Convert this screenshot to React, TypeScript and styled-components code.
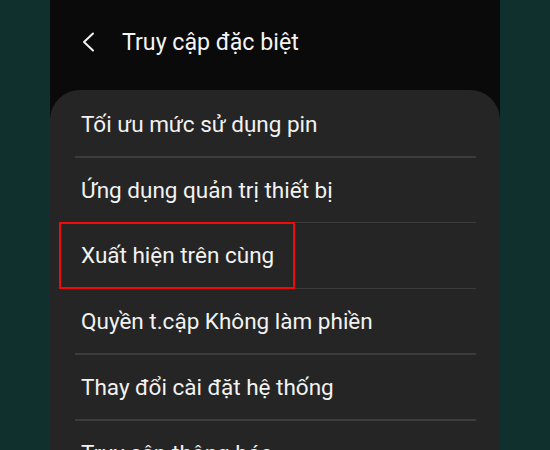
import React from 'react';
import styled, { createGlobalStyle } from 'styled-components';

const GlobalStyle = createGlobalStyle`
  html, body {
    margin: 0;
    padding: 0;
    background: #0f302c;
    font-family: Roboto, 'Noto Sans', 'Liberation Sans', sans-serif;
  }
`;

const Page = styled.div`
  width: 550px;
  height: 450px;
  display: flex;
  justify-content: center;
  overflow: hidden;
`;

const Screen = styled.div`
  width: 450px;
  height: 450px;
  background: #0a0a0a;
  display: flex;
  flex-direction: column;
`;

const Header = styled.div`
  height: 90px;
  flex-shrink: 0;
  display: flex;
  align-items: center;
  padding: 0 0 6px 31px;
  box-sizing: border-box;
  gap: 27px;
  color: #f2f2f2;
`;

const BackButton = styled.div`
  width: 14px;
  height: 20px;
  display: flex;
  align-items: center;
  justify-content: center;
`;

const Title = styled.h1`
  margin: 0;
  font-size: 23.2px;
  font-weight: 400;
  color: #f4f4f4;
`;

const Card = styled.div`
  flex: 1;
  background: #252525;
  border-radius: 30px 30px 0 0;
  padding-top: 1.75px;
  display: flex;
  flex-direction: column;
`;

const Row = styled.div`
  position: relative;
  height: 64.25px;
  flex-shrink: 0;
  display: flex;
  align-items: center;
  padding-left: 31px;
  font-size: 22.5px;
  color: #f2f2f2;
`;

const Divider = styled.div`
  height: 1.5px;
  flex-shrink: 0;
  margin: 0 24px 0 25px;
  background: #3c3c3c;
`;

const Highlight = styled.div`
  position: absolute;
  left: 9px;
  top: -1.5px;
  width: 236px;
  height: 67px;
  border: 2.5px solid #f00a0a;
  box-sizing: border-box;
`;

const items = [
  'Tối ưu mức sử dụng pin',
  'Ứng dụng quản trị thiết bị',
  'Xuất hiện trên cùng',
  'Quyền t.cập Không làm phiền',
  'Thay đổi cài đặt hệ thống',
  'Truy cập thông báo',
];

const App = () => {
  return (
    <>
      <GlobalStyle />
      <Page>
        <Screen>
          <Header>
            <BackButton>
              <svg width="14" height="20" viewBox="0 0 14 20" fill="none">
                <path d="M12 1.5 L3 10 L12 18.5" stroke="#f2f2f2" strokeWidth="2" strokeLinecap="round" strokeLinejoin="round" />
              </svg>
            </BackButton>
            <Title>Truy cập đặc biệt</Title>
          </Header>
          <Card>
            {items.map((text, i) => (
              <React.Fragment key={text}>
                {i > 0 && <Divider />}
                <Row>
                  {text}
                  {i === 2 && <Highlight />}
                </Row>
              </React.Fragment>
            ))}
          </Card>
        </Screen>
      </Page>
    </>
  );
};

export default App;
